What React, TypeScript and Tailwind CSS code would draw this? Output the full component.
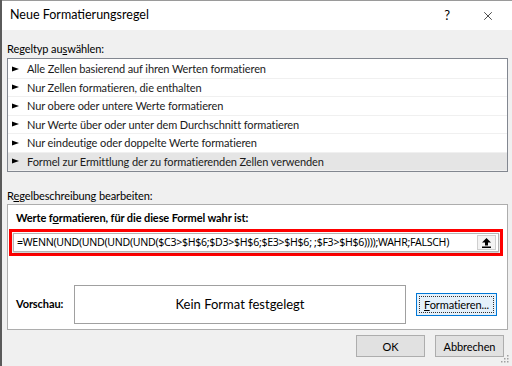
import { X } from 'lucide-react'

const RULE_TYPES = [
  'Alle Zellen basierend auf ihren Werten formatieren',
  'Nur Zellen formatieren, die enthalten',
  'Nur obere oder untere Werte formatieren',
  'Nur Werte über oder unter dem Durchschnitt formatieren',
  'Nur eindeutige oder doppelte Werte formatieren',
  'Formel zur Ermittlung der zu formatierenden Zellen verwenden',
]

const FORMULA = '=WENN(UND(UND(UND(UND($C3>$H$6;$D3>$H$6;$E3>$H$6; ;$F3>$H$6))));WAHR;FALSCH)'

const Pointer = () => (
  <svg width="7" height="6" viewBox="0 0 7 6" className="shrink-0">
    <polygon points="0,0.5 7,3 0,5.5" fill="#000" />
  </svg>
)

export default function App() {
  return (
    <div
      className="relative w-[512px] h-[366px] overflow-hidden bg-[#f0f0f0] border-l-2 border-[#5a5a5a] text-[11px] tracking-[-0.1px] text-black"
      style={{ fontFamily: 'Lato, "Noto Sans", sans-serif' }}
    >
      {/* title bar */}
      <div className="flex h-[30px] items-center bg-white border-t border-[#9a9a9a] tracking-normal">
        <span className="pl-[8px] text-[12.5px] leading-none">Neue Formatierungsregel</span>
        <span className="ml-auto mr-[31px] text-[13px] leading-none">?</span>
        <X className="mr-[17px] size-[14px]" strokeWidth={1.2} />
      </div>

      <div className="flex flex-col pl-[5px] pr-[4px]">
        <div className="pt-[12px] leading-[14px]">
          Regeltyp au<span className="underline">s</span>wählen:
        </div>

        <div className="mt-[2px] h-[114px] border border-[#828790] bg-white pt-px">
          {RULE_TYPES.map((t, i) => (
            <div
              key={i}
              className={
                'flex h-[18.5px] items-center gap-[8px] pl-[4px] border-b border-[#f0f0f0] ' +
                (i === RULE_TYPES.length - 1 ? 'bg-[#e5e5e5]' : '')
              }
            >
              <Pointer />
              <span className="leading-none text-[#1a1a1a]">{t}</span>
            </div>
          ))}
        </div>

        <div className="mt-[17px] leading-[14px]">
          R<span className="underline">e</span>gelbeschreibung bearbeiten:
        </div>

        <div className="mt-px flex h-[126px] flex-col border border-[#adadad] bg-white pl-px pr-[4px]">
          <div className="pt-[6px] pl-[7px] font-bold leading-[14px]">
            Werte f<span className="underline">o</span>rmatieren, für die diese Formel wahr ist:
          </div>

          <div className="mt-[4px] h-[27px] border-[3px] border-[#ff0000] px-[1px] py-[1px]">
            <div className="flex h-full items-center border border-[#b4b4b4] bg-white shadow-[0_1px_2px_rgba(0,0,0,0.25)]">
              <span
                className="pl-[3px] text-[10.6px] leading-none tracking-[-0.3px] whitespace-nowrap"
                style={{ fontFamily: '"Noto Sans", sans-serif' }}
              >
                {FORMULA}
              </span>
              <button className="ml-auto mr-[2px] flex h-[15px] w-[19px] items-center justify-center border border-[#cfcfcf] bg-[#f3f3f3]">
                <svg width="9" height="10" viewBox="0 0 9 10">
                  <polygon points="4.5,0 9,4.5 6,4.5 6,7.5 3,7.5 3,4.5 0,4.5" fill="#000" />
                  <rect x="0" y="8.5" width="9" height="1.5" fill="#000" />
                </svg>
              </button>
            </div>
          </div>

          <div className="mt-[29px] flex items-center">
            <span className="w-[65px] pl-[7px] font-bold">Vorschau:</span>
            <div className="flex h-[39px] w-[332px] items-center justify-center border border-[#a0a0a0] text-[13px] tracking-normal">
              Kein Format festgelegt
            </div>
            <button className="ml-[10px] h-[23px] w-[81px] border border-[#0078d7] bg-[#e5f1fb] p-[2px]">
              <div className="flex h-full items-center justify-center border border-dotted border-[#333]">
                <span className="leading-none">
                  <span className="underline">F</span>ormatieren...
                </span>
              </div>
            </button>
          </div>
        </div>

        <div className="mt-[5px] flex justify-end gap-[10px] pr-[4px]">
          <button className="h-[22px] w-[69px] border border-[#adadad] bg-[#e1e1e1] leading-none">OK</button>
          <button className="h-[22px] w-[69px] border border-[#adadad] bg-[#e1e1e1] leading-none">Abbrechen</button>
        </div>
      </div>

      {/* resize grip */}
      <svg className="absolute bottom-[3px] right-[3px]" width="10" height="10" viewBox="0 0 10 10">
        {[
          [8, 2], [8, 5], [5, 5], [8, 8], [5, 8], [2, 8],
        ].map(([x, y], i) => (
          <rect key={i} x={x} y={y} width="1.5" height="1.5" fill="#a0a0a0" />
        ))}
      </svg>
    </div>
  )
}
